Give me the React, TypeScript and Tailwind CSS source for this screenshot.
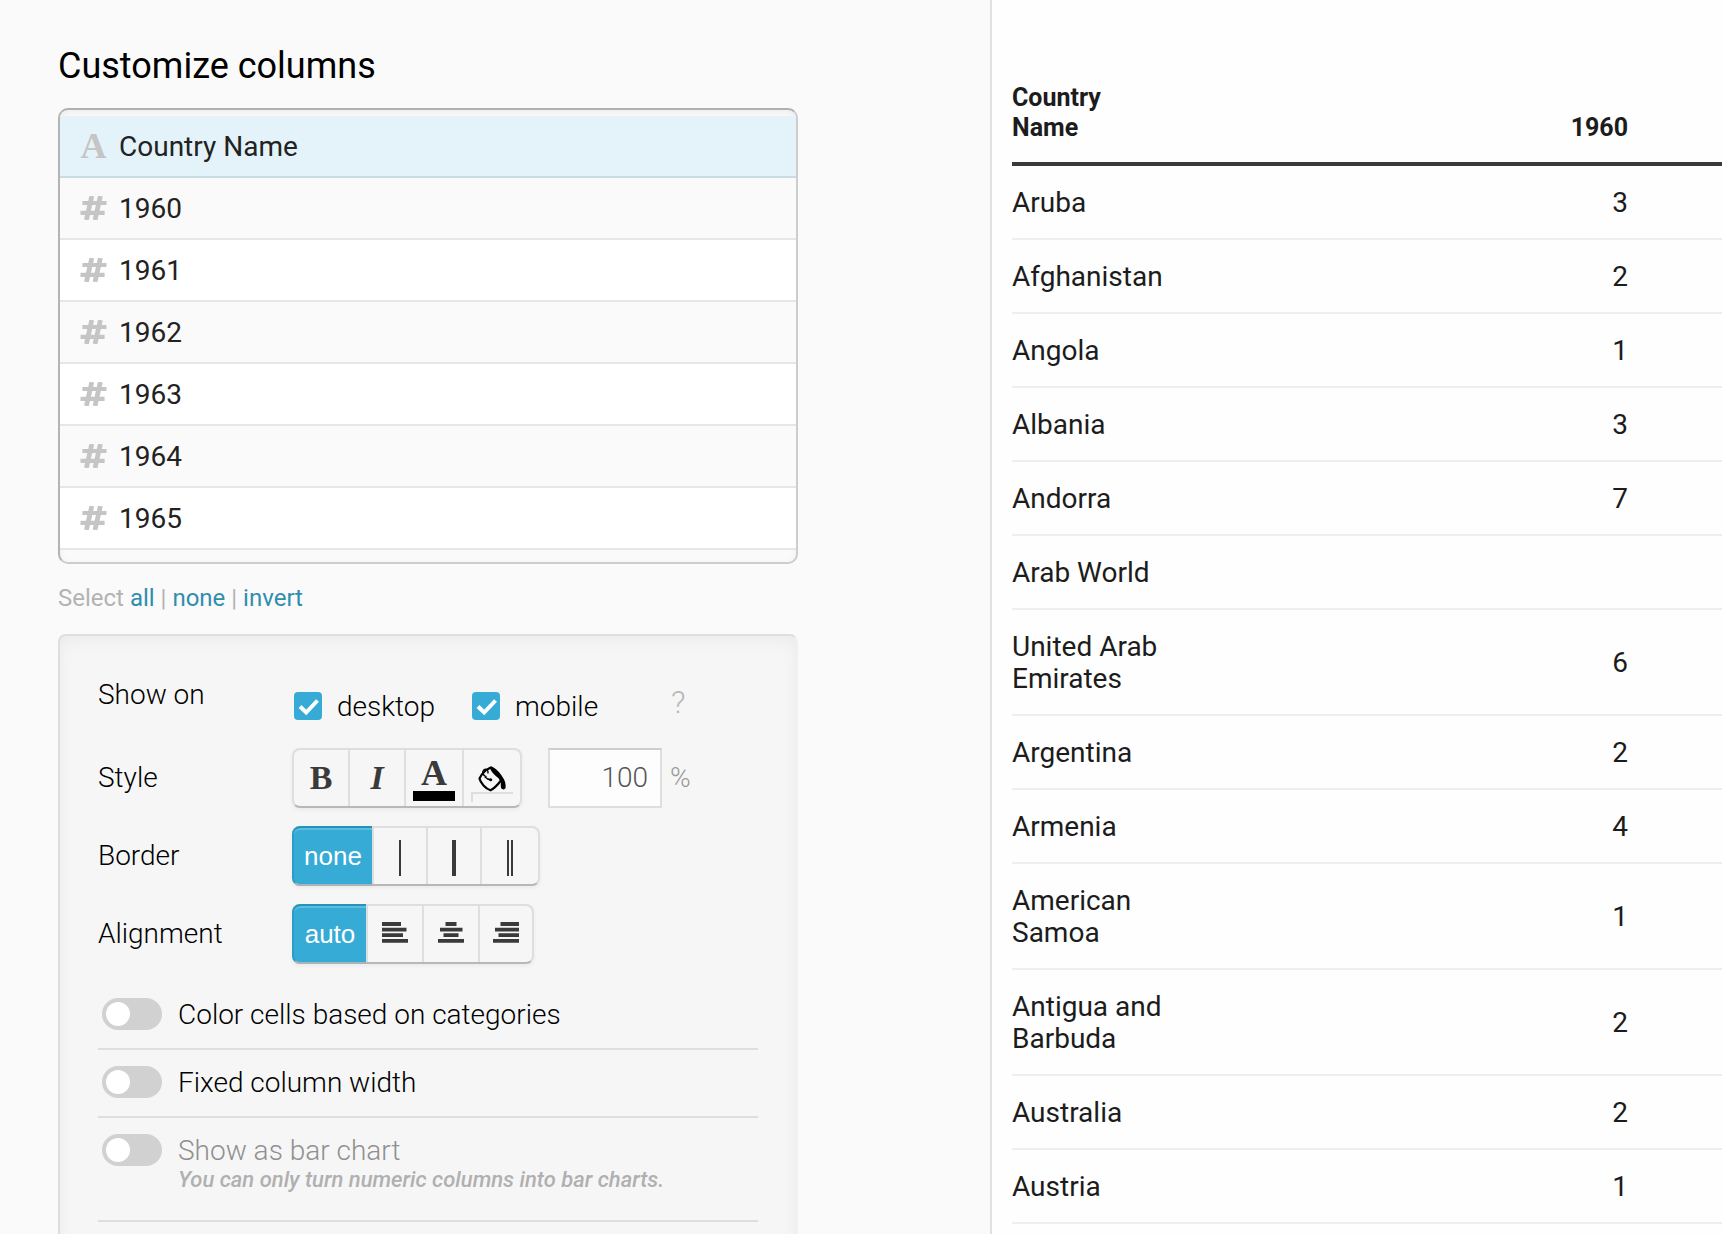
import { useState } from 'react';

const columns = [
  { name: 'Country Name', type: 'text' },
  { name: '1960', type: 'number' },
  { name: '1961', type: 'number' },
  { name: '1962', type: 'number' },
  { name: '1963', type: 'number' },
  { name: '1964', type: 'number' },
  { name: '1965', type: 'number' },
];

const countries = [
  { name: 'Aruba', value: '3' },
  { name: 'Afghanistan', value: '2' },
  { name: 'Angola', value: '1' },
  { name: 'Albania', value: '3' },
  { name: 'Andorra', value: '7' },
  { name: 'Arab World', value: '' },
  { name: 'United Arab Emirates', value: '6' },
  { name: 'Argentina', value: '2' },
  { name: 'Armenia', value: '4' },
  { name: 'American Samoa', value: '1' },
  { name: 'Antigua and Barbuda', value: '2' },
  { name: 'Australia', value: '2' },
  { name: 'Austria', value: '1' },
];

const groupClass =
  'flex h-[60px] rounded-lg border-2 border-[#dedede] border-b-[#b8b8b8] bg-[#f6f6f6] shadow-[0_2px_4px_rgba(0,0,0,0.05)]';
const activeClass =
  '-my-[2px] -ml-[2px] flex items-center justify-center rounded-l-lg border-y-2 border-l-2 border-t-[#2196bd] border-l-[#2a9dc4] border-b-[#a9b4b8] bg-[#36abd5] font-["Liberation_Sans",sans-serif] text-[26px] leading-8 text-white shadow-[inset_0_2px_0_#5fbcdc]';
const buttonClass = 'flex items-center justify-center border-l-2 border-[#dedede] text-[#3a3a3a]';

function HashIcon() {
  return (
    <svg className="h-6 w-[27px]" viewBox="0 0 27 24" fill="none" stroke="currentColor" strokeWidth="4.8">
      <path d="M11.8 0L6.4 24M20.4 0L15 24" />
      <path d="M2.4 7H26.5M.5 16.8H24.6" strokeWidth="4.2" />
    </svg>
  );
}

function BucketIcon() {
  return (
    <svg className="h-[26px] w-[28px]" viewBox="0 0 28 26" fill="none" stroke="currentColor" strokeWidth="2.2" strokeLinejoin="round">
      <path d="M12.7 1.5C8.5 3.5 3.5 8 1.5 12.5C2.5 17 7.500 22.500 12.500 24.300C16 22.500 19.500 19 23 14.500C20.500 8.500 17 3.500 12.700 1.500Z" />
      <path d="M8.500 10.800C4.500 9.500 3.800 5.500 6 3.700C8 2.300 10.500 4 10 7.500M6.500 10.500C8.500 12.500 10 13.600 12.500 13.800" strokeWidth="1.4" />
      <circle cx="12.700" cy="13.700" r="1.500" fill="currentColor" stroke="none" />
      <path d="M11.500 1.500C14 7.500 18.500 10.500 23.200 14.200C22.800 17 22.500 20 23.200 22.300C24.200 24 27 23.800 27.600 21.800C28 18.500 27 14 24.500 11C22 6.500 17.500 2 13.500 .5Z" fill="currentColor" stroke="none" />
    </svg>
  );
}

function AlignIcon({ d }: { d: string }) {
  return (
    <svg className="mb-1 h-[21px] w-[26px]" viewBox="0 0 26 21" fill="none" stroke="currentColor" strokeWidth="3.8" strokeLinecap="butt">
      <path d={d} />
    </svg>
  );
}

function CheckBox({ label }: { label: string }) {
  return (
    <label className="flex items-center gap-[15px]">
      <span className="grid">
        <input type="checkbox" defaultChecked className="col-start-1 row-start-1 size-7 appearance-none rounded bg-[#36abd5]" />
        <svg className="pointer-events-none col-start-1 row-start-1 size-7" viewBox="0 0 28 28" fill="none" stroke="#fff" strokeWidth="4">
          <path d="M6 14.500L12.200 20.500L23.500 8.500" />
        </svg>
      </span>
      <span className="pt-[2px]">{label}</span>
    </label>
  );
}

function Toggle({ label, note }: { label: string; note?: string }) {
  return (
    <label className={note ? 'flex h-[104px] gap-4 border-b-2 border-[#dedede] pt-4 pl-1 text-[#909090]' : 'flex h-[68px] gap-4 border-b-2 border-[#dedede] pt-4 pl-1'}>
      <input
        type="checkbox"
        role="switch"
        disabled={!!note}
        className="h-8 w-[60px] shrink-0 appearance-none rounded-full bg-[#d1d1d1] p-1 before:block before:size-6 before:rounded-full before:bg-white"
      />
      <span className="leading-[34px]">
        {label}
        {note && <em className="block text-[22px] leading-6 font-medium text-[#b0b0b0]">{note}</em>}
      </span>
    </label>
  );
}

export default function App() {
  const [selected, setSelected] = useState('Country Name');

  return (
    <div className="grid h-screen grid-cols-[minmax(0,992px)_1fr] overflow-hidden bg-[#fefefe] font-[Roboto,sans-serif] text-[28px] text-black">
      <section className="border-r-2 border-[#e0e0e0] bg-[#fafafa] pt-11 pr-[192px] pl-[58px]">
        <h2 className="text-[36px] leading-[44px]">Customize columns</h2>

        <ul className="mt-5 h-[456px] overflow-hidden rounded-[10px] border-2 border-[#cdcdcd] border-t-[#b0b0b0] border-l-[#b4b4b4] bg-[#fafafa] pt-[6px] text-[#222] shadow-[inset_0_2px_6px_rgba(0,0,0,0.06)]">
          {columns.map((col) => (
            <li
              key={col.name}
              className={
                selected === col.name
                  ? 'border-b-2 border-[#c9dbe3] bg-[#e4f3f9]'
                  : 'border-b-2 border-[#e6e6e6] odd:bg-white even:bg-[#fafafa]'
              }
            >
              <button type="button" onClick={() => setSelected(col.name)} className="flex h-[60px] w-full items-center gap-3 px-5 text-left">
                <span className="flex w-[27px] justify-center text-[#c5c5c5]">
                  {col.type === 'text' ? (
                    <span className='font-["Liberation_Serif",serif] text-[36px] leading-8 font-bold'>A</span>
                  ) : (
                    <HashIcon />
                  )}
                </span>
                <span className="pt-[2px]">{col.name}</span>
              </button>
            </li>
          ))}
        </ul>

        <p className="mt-[18px] text-[24px] leading-8 text-[#b3b3b3]">
          Select <a href="#all" className="text-[#318dae]">all</a> | <a href="#none" className="text-[#318dae]">none</a> |{' '}
          <a href="#invert" className="text-[#318dae]">invert</a>
        </p>

        <div className="mt-5 h-[640px] rounded-[8px] border-2 border-[#dedede] border-r-[#f0f0f0] bg-[#f6f6f6] px-[38px] pt-10 font-light shadow-[inset_0_4px_16px_rgba(0,0,0,0.05)]">
          <div className="flex h-[72px]">
            <span className="w-[196px] leading-[38px]">Show on</span>
            <div className="flex h-[60px] items-center">
              <div className="w-[178px]"><CheckBox label="desktop" /></div>
              <div className="w-[199px]"><CheckBox label="mobile" /></div>
              <span className="pb-2 text-[32px] text-[#b8b8b8]">?</span>
            </div>
          </div>

          <div className="flex h-[78px] leading-[60px]">
            <span className="w-[194px]">Style</span>
            <div className={groupClass}>
              <button type="button" className='w-[54px] font-["Liberation_Serif",serif] text-[34px] leading-9 font-bold text-[#3a3a3a]'>B</button>
              <button type="button" className={buttonClass + ' w-[56px] font-["Liberation_Serif",serif] text-[34px] leading-9 font-bold italic'}>I</button>
              <button type="button" className={buttonClass + ' w-[58px] flex-col font-["Liberation_Serif",serif] text-[36px] leading-9 font-bold'}>
                A
                <span className="h-[10px] w-[42px] bg-black" />
              </button>
              <button type="button" className="flex w-[58px] flex-col items-center justify-end border-l-2 border-[#dedede] pb-1 text-black">
                <BucketIcon />
                <span className="h-[10px] w-[42px] border-t-2 border-l-2 border-[#dedede]" />
              </button>
            </div>
            <input
              type="text"
              aria-label="Font size"
              defaultValue="100"
              className="ml-[26px] h-[60px] w-[114px] border-2 border-[#dedede] border-t-[#cdcdcd] bg-[#fdfdfd] pr-3 text-right text-[#555]"
            />
            <span className="ml-2 text-[#999]">%</span>
          </div>

          <div className="flex h-[78px] leading-[60px]">
            <span className="w-[194px]">Border</span>
            <div className={groupClass}>
              <button type="button" className={activeClass + ' w-20'}>none</button>
              <button type="button" aria-label="thin" className={buttonClass + ' w-[54px]'}>
                <span className="mt-1 h-9 w-[2px] bg-[#3a3a3a]" />
              </button>
              <button type="button" aria-label="thick" className={buttonClass + ' w-[54px]'}>
                <span className="mt-1 h-9 w-1 bg-[#3a3a3a]" />
              </button>
              <button type="button" aria-label="double" className={buttonClass + ' w-[58px]'}>
                <span className="mt-1 h-9 w-[6px] border-x-2 border-[#3a3a3a]" />
              </button>
            </div>
          </div>

          <div className="flex h-[78px] leading-[60px]">
            <span className="w-[194px]">Alignment</span>
            <div className={groupClass}>
              <button type="button" className={activeClass + ' w-[74px]'}>auto</button>
              <button type="button" aria-label="left" className={buttonClass + ' w-[56px]'}>
                <AlignIcon d="M0 2H19M0 7.600H24.500M0 13.200H21M0 18.800H26" />
              </button>
              <button type="button" aria-label="center" className={buttonClass + ' w-[56px]'}>
                <AlignIcon d="M7.500 2H18.500M2 7.600H24.500M5.500 13.200H20.500M0 18.800H26" />
              </button>
              <button type="button" aria-label="right" className={buttonClass + ' w-[54px]'}>
                <AlignIcon d="M7.500 2H26M2 7.600H26M5.500 13.200H26M0 18.800H26" />
              </button>
            </div>
          </div>

          <Toggle label="Color cells based on categories" />
          <Toggle label="Fixed column width" />
          <Toggle label="Show as bar chart" note="You can only turn numeric columns into bar charts." />
        </div>
      </section>

      <section className="pt-[82px] pl-5">
        <table className="w-full text-[#1c1c1c]">
          <thead className="border-b-4 border-[#3a3a3a] text-[25px] leading-[30px]">
            <tr>
              <th className="w-[160px] pt-[1px] pb-[19px] text-left font-bold">Country Name</th>
              <th className="pr-[94px] pb-[19px] text-right align-bottom font-bold">1960</th>
            </tr>
          </thead>
          <tbody className="leading-8">
            {countries.map((country) => (
              <tr key={country.name} className="border-b-2 border-[#eee]">
                <td className="pt-[21px] pb-[19px]">{country.name}</td>
                <td className="pt-[21px] pr-[94px] pb-[19px] text-right">{country.value}</td>
              </tr>
            ))}
          </tbody>
        </table>
      </section>
    </div>
  );
}
